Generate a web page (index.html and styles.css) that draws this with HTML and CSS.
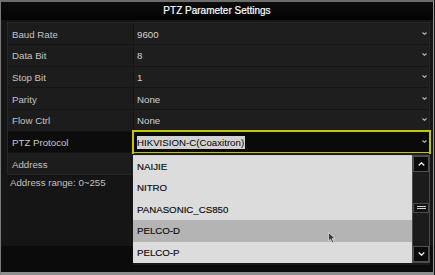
FILE: index.html
```html
<!DOCTYPE html>
<html>
<head>
<meta charset="utf-8">
<link rel="stylesheet" href="styles.css">
</head>
<body>
<div class="dialog">
  <div class="titlebar">PTZ Parameter Settings</div>
  <div class="body">
    <div class="params">
      <div class="row"><div class="label">Baud Rate</div><div class="value"><span>9600</span><svg class="caret" width="5" height="3" viewBox="0 0 5 3"><polyline points="0.5,0.5 2.5,2.3 4.5,0.5" fill="none" stroke="#bdbdbd" stroke-width="1.1"/></svg></div></div>
      <div class="row"><div class="label">Data Bit</div><div class="value"><span>8</span><svg class="caret" width="5" height="3" viewBox="0 0 5 3"><polyline points="0.5,0.5 2.5,2.3 4.5,0.5" fill="none" stroke="#bdbdbd" stroke-width="1.1"/></svg></div></div>
      <div class="row"><div class="label">Stop Bit</div><div class="value"><span>1</span><svg class="caret" width="5" height="3" viewBox="0 0 5 3"><polyline points="0.5,0.5 2.5,2.3 4.5,0.5" fill="none" stroke="#bdbdbd" stroke-width="1.1"/></svg></div></div>
      <div class="row"><div class="label">Parity</div><div class="value"><span>None</span><svg class="caret" width="5" height="3" viewBox="0 0 5 3"><polyline points="0.5,0.5 2.5,2.3 4.5,0.5" fill="none" stroke="#bdbdbd" stroke-width="1.1"/></svg></div></div>
      <div class="row"><div class="label">Flow Ctrl</div><div class="value"><span>None</span><svg class="caret" width="5" height="3" viewBox="0 0 5 3"><polyline points="0.5,0.5 2.5,2.3 4.5,0.5" fill="none" stroke="#bdbdbd" stroke-width="1.1"/></svg></div></div>
      <div class="row active">
        <div class="label">PTZ Protocol</div>
        <div class="value">
          <span class="sel">HIKVISION-C(Coaxitron)</span><svg class="caret" width="5" height="3" viewBox="0 0 5 3"><polyline points="0.5,0.5 2.5,2.3 4.5,0.5" fill="none" stroke="#bdbdbd" stroke-width="1.1"/></svg>
          <div class="dropdown">
            <ul class="items">
              <li>NAIJIE</li>
              <li>NITRO</li>
              <li>PANASONIC_CS850</li>
              <li class="hover">PELCO-D</li>
              <li>PELCO-P</li>
            </ul>
            <div class="scrollbar">
              <div class="sbtn"><svg width="7" height="4" viewBox="0 0 7 4"><polyline points="0.7,3.4 3.5,0.8 6.3,3.4" fill="none" stroke="#f0f0f0" stroke-width="1.3"/></svg></div>
              <div class="track"><div class="thumb"><span></span><span></span></div></div>
              <div class="sbtn"><svg width="7" height="4" viewBox="0 0 7 4"><polyline points="0.7,0.6 3.5,3.2 6.3,0.6" fill="none" stroke="#f0f0f0" stroke-width="1.3"/></svg></div>
            </div>
          </div>
        </div>
      </div>
      <div class="row tall"><div class="label">Address</div><div class="value"></div></div>
    </div>
    <div class="hint">Address range: 0~255</div>
  </div>
  <div class="footer"></div>
  <svg class="cursor" width="8" height="12" viewBox="0 0 8 12"><path d="M0.5 0.5 L0.5 9 L2.6 7.2 L4 10.8 L5.6 10.2 L4.2 6.6 L7 6.6 Z" fill="#3a3a3a" stroke="#e8e8e8" stroke-width="0.7"/></svg>
</div>
</body>
</html>
```
FILE: styles.css
```css
html, body {
  margin: 0;
  padding: 0;
  background: #151515;
}
.dialog {
  position: relative;
  box-sizing: border-box;
  width: 434px;
  height: 275px;
  display: flex;
  flex-direction: column;
  background: #151515;
  border-top: 2px solid #6c6c6c;
  border-left: 1px solid #7a7a7a;
  border-right: 1px solid #9a9a9a;
  border-bottom: 3px solid #8e8e8e;
  font-family: "Liberation Sans", Arial, sans-serif;
  font-size: 9.7px;
  color: #c6c6c6;
  overflow: hidden;
}
.titlebar {
  height: 18px;
  line-height: 18px;
  text-align: center;
  color: #ffffff;
  font-size: 10px;
  background: linear-gradient(#0c0c0c, #030303);
  -webkit-text-stroke: 0.2px #ffffff;
}
.body {
  flex: 1;
  padding: 2.3px 2px 0 6px;
}
.params {
  display: flex;
  flex-direction: column;
  gap: 1px;
  background: #141414;
  border: 1px solid #262626;
  width: 421px;
}
.row {
  display: flex;
  height: 20.67px;
  gap: 1px;
}
.label {
  width: 125px;
  padding: 1px 0 0 4px;
  box-sizing: border-box;
  display: flex;
  align-items: center;
  background: #1c1c1c;
  color: #c4c4c4;
}
.value {
  position: relative;
  flex: 1;
  display: flex;
  align-items: center;
  justify-content: space-between;
  padding: 1px 2px 0 3px;
  box-sizing: border-box;
  background: #1e1e1e;
  color: #d2d2d2;
}
.row.tall .label {
  padding-top: 2px;
}
.caret {
  display: block;
  margin-top: -2px;
}
.row.active .label {
  background: #0c0c0c;
  color: #c8c8c8;
}
.row.active .value {
  background: #0a0a0a;
  outline: 2px solid #c3c300;
}
.sel {
  background: #d2d2d2;
  color: #000;
  padding: 1px 1px 1px 0;
  line-height: 11px;
}
.dropdown {
  position: absolute;
  left: -1px;
  right: -1px;
  top: 23.4px;
  display: flex;
  background: #dcdcdc;
  border-bottom: 2px solid #1a1a1a;
  z-index: 2;
}
.items {
  flex: 1;
  list-style: none;
  margin: 0;
  padding: 0;
  border-top: 1px solid #cfcfcf;
}
.items li {
  height: 21.5px;
  line-height: 21.5px;
  padding-left: 4px;
  color: #0a0a0a;
  -webkit-text-stroke: 0.15px #0a0a0a;
}
.items li.hover {
  background: #b4b4b4;
}
.scrollbar {
  width: 18px;
  box-sizing: border-box;
  display: flex;
  flex-direction: column;
  background: #1b1b1b;
  border: 1px solid #4a4a4a;
}
.sbtn {
  height: 16px;
  box-sizing: border-box;
  border: 1px solid #505050;
  background: #0b0b0b;
  display: flex;
  align-items: center;
  justify-content: center;
}
.track {
  flex: 1;
}
.thumb {
  margin-top: 31px;
  height: 10px;
  box-sizing: border-box;
  border: 1px solid #4a4a4a;
  background: #141414;
  display: flex;
  flex-direction: column;
  align-items: center;
  justify-content: center;
  gap: 1px;
}
.thumb span {
  display: block;
  width: 9px;
  height: 1px;
  background: #cfcfcf;
}
.hint {
  margin-top: 1px;
  margin-left: 3px;
  line-height: 14px;
  color: #c0c0c0;
}
.footer {
  height: 26px;
  background: #0b0b0b;
}
.cursor {
  position: absolute;
  left: 327px;
  top: 230px;
  z-index: 3;
}
```
